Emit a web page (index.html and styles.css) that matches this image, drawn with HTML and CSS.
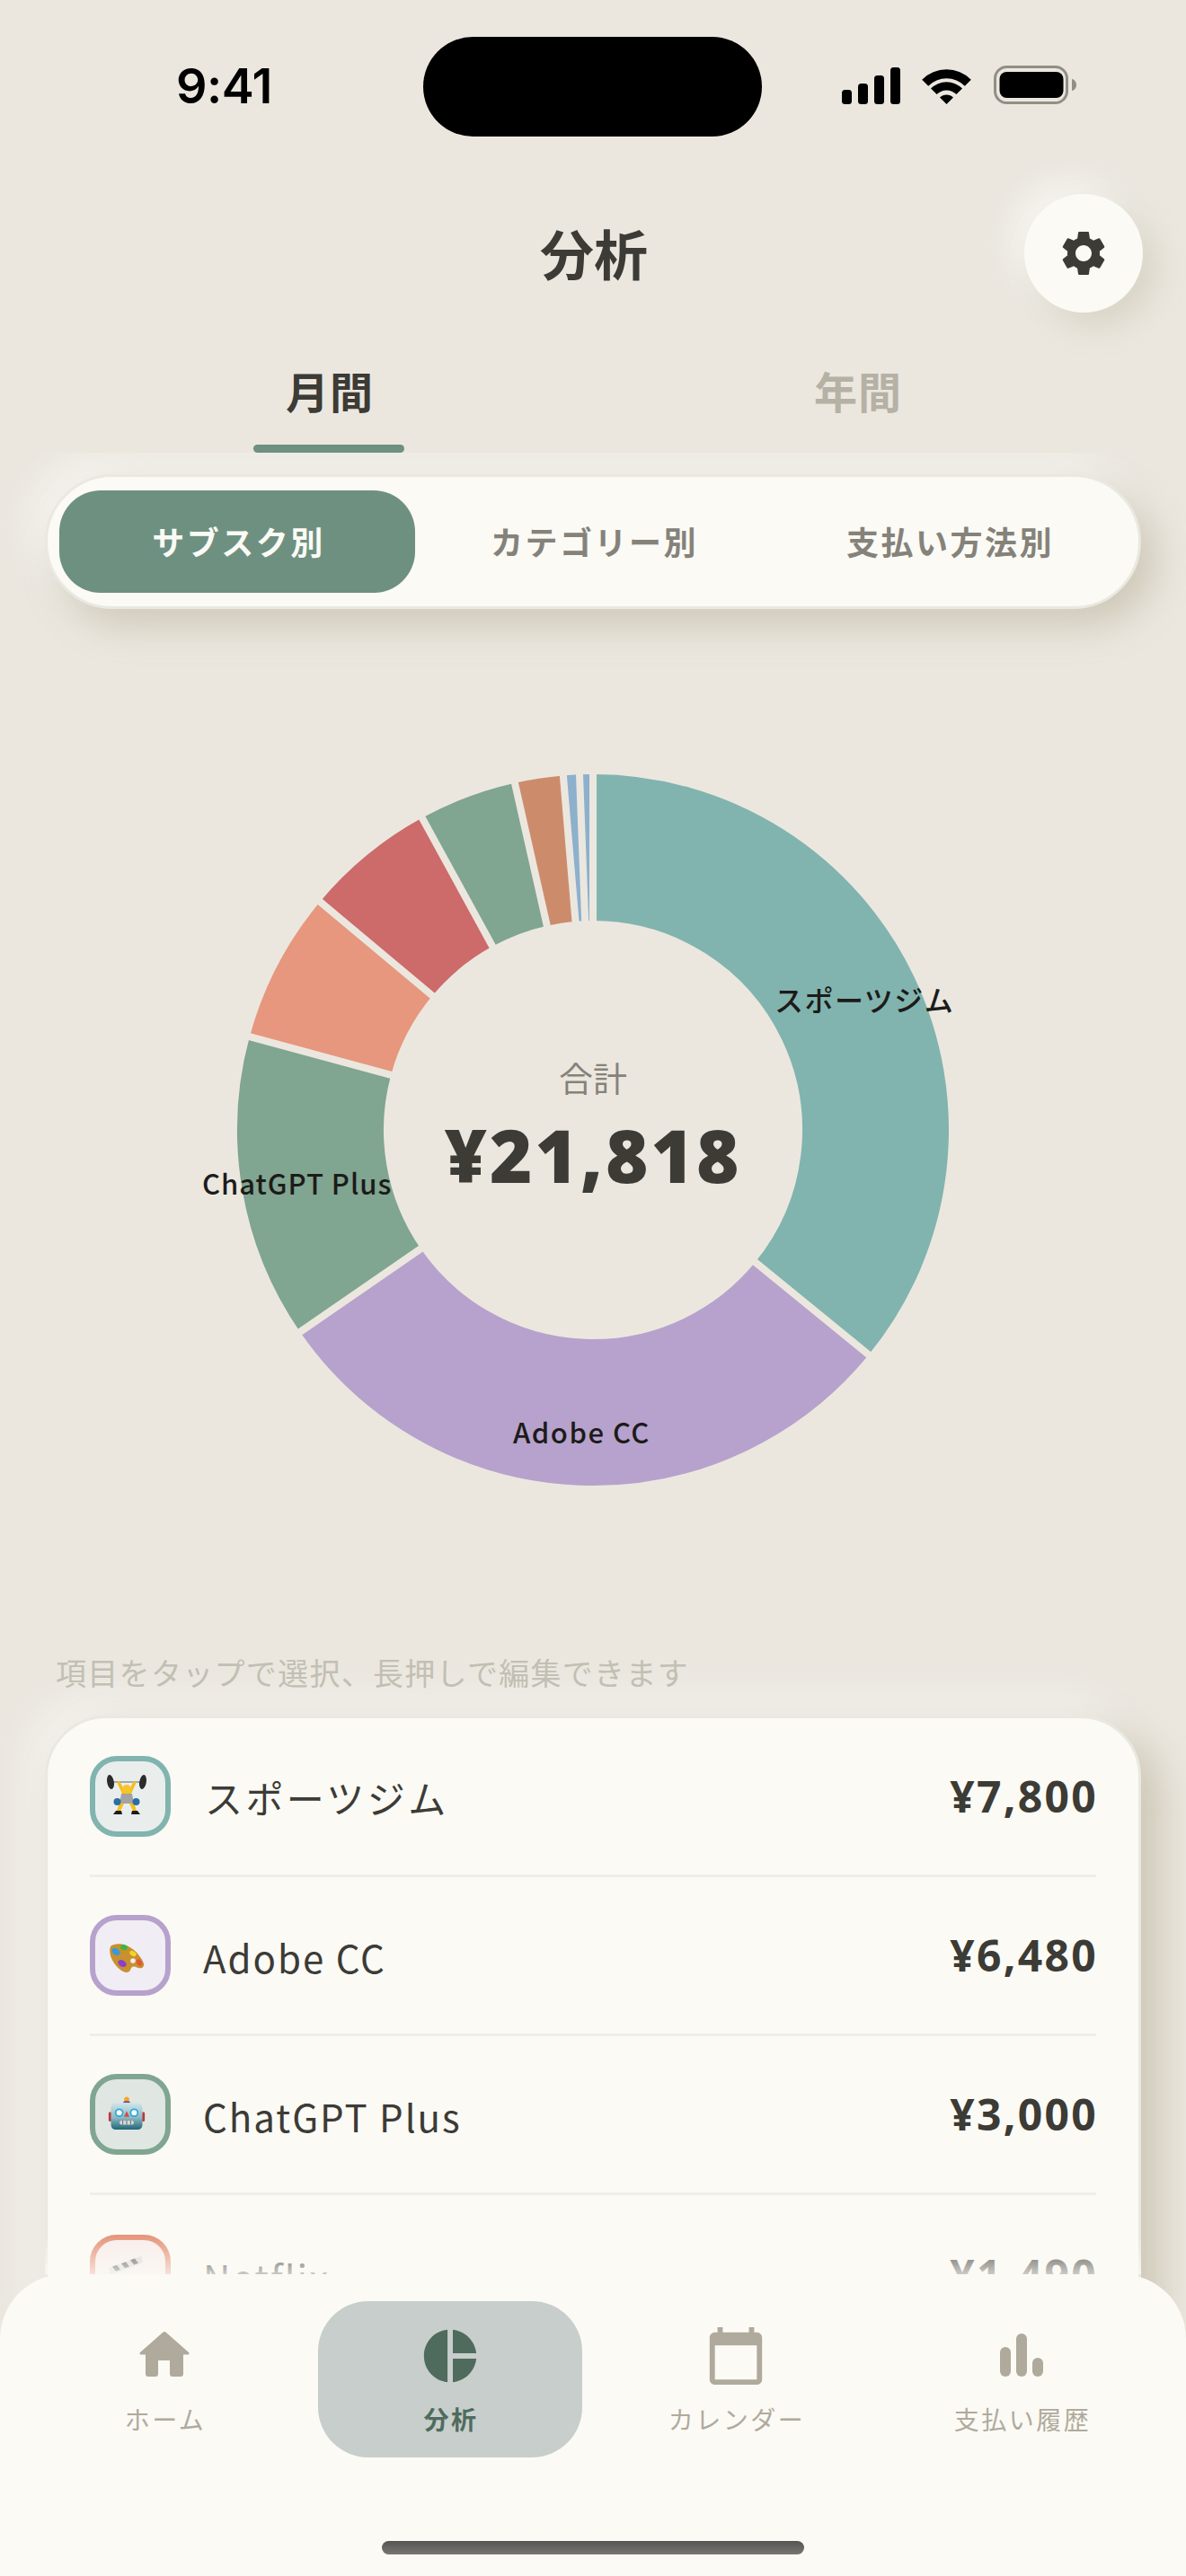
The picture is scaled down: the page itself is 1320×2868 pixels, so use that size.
FILE: index.html
```html
<!DOCTYPE html>
<html lang="ja">
<head>
<meta charset="utf-8">
<title>分析</title>
<link rel="stylesheet" href="styles.css">
</head>
<body>
<div class="page">
  <header class="status">
    <span class="time">9:41</span>
    <div class="island"></div>
    <div class="status-icons">
      <svg class="signal" width="65" height="41" viewBox="0 0 65 41"><rect x="0" y="25" width="11" height="16" rx="3.5"/><rect x="18" y="18" width="11" height="23" rx="3.5"/><rect x="36" y="9" width="11" height="32" rx="3.5"/><rect x="54" y="0" width="11" height="41" rx="3.5"/></svg>
      <svg class="wifi" width="57" height="42" viewBox="0 0 57 42"><path d="M1.2 14.7a38.5 38.5 0 0 1 54.6 0l-7 7a28.5 28.5 0 0 0-40.6 0z"/><path d="M11 24.6a24.5 24.5 0 0 1 35 0l-6.6 6.5a15.2 15.2 0 0 0-21.8 0z"/><path d="M21 34.5a10.6 10.6 0 0 1 15 0L28.5 42z"/></svg>
      <svg class="battery" width="92" height="43" viewBox="0 0 92 43"><rect x="1.5" y="1.5" width="80" height="40" rx="13" fill="none" stroke="#918e86" stroke-width="3"/><rect x="6.500" y="7" width="71" height="29" rx="8"/><path d="M87 15c3 .6 5 3.200 5 6.500s-2 5.900-5 6.500z" fill="#918e86"/></svg>
    </div>
  </header>

  <div class="title-row">
    <h1 class="title">分析</h1>
    <button class="gear-btn">
      <svg width="60" height="60" viewBox="0 0 24 24"><path d="M19.14 12.94c.04-.3.06-.61.06-.94 0-.32-.02-.64-.07-.94l2.03-1.58c.18-.14.23-.41.12-.61l-1.92-3.32c-.12-.22-.37-.29-.59-.22l-2.39.96c-.5-.38-1.03-.7-1.62-.94l-.36-2.54c-.04-.24-.24-.41-.48-.41h-3.84c-.24 0-.43.17-.47.41l-.36 2.54c-.59.24-1.13.57-1.62.94l-2.39-.96c-.22-.08-.47 0-.59.22L2.74 8.87c-.12.21-.08.47.12.61l2.03 1.58c-.05.3-.09.63-.09.94s.02.64.07.94l-2.03 1.58c-.18.14-.23.41-.12.61l1.92 3.32c.12.22.37.29.59.22l2.39-.96c.5.38 1.03.7 1.62.94l.36 2.54c.05.24.24.41.48.41h3.84c.24 0 .44-.17.47-.41l.36-2.54c.59-.24 1.13-.56 1.62-.94l2.39.96c.22.08.47 0 .59-.22l1.92-3.32c.12-.22.07-.47-.12-.61l-2.01-1.58zM12 15.6c-1.98 0-3.6-1.62-3.6-3.6s1.62-3.6 3.6-3.6 3.6 1.62 3.6 3.6-1.62 3.6-3.6 3.6z"/></svg>
    </button>
  </div>

  <nav class="period">
    <div class="period-tab is-active">月間</div>
    <div class="period-tab">年間</div>
  </nav>

  <main class="content">
    <div class="segment">
      <div class="seg is-active">サブスク別</div>
      <div class="seg">カテゴリー別</div>
      <div class="seg">支払い方法別</div>
    </div>

    <section class="chart">
      <svg class="donut" width="800" height="800" viewBox="0 0 800 800">
        <g fill="none" stroke-width="163">
          <path stroke="#81b4ae" d="M400 85.500A314.500 314.500 0 0 1 643.700 598.800"/>
          <path stroke="#b6a2cc" d="M643.700 598.800A314.500 314.500 0 0 1 141.100 578.600"/>
          <path stroke="#80a590" d="M141.100 578.600A314.500 314.500 0 0 1 96.500 317.500"/>
          <path stroke="#e6977d" d="M96.500 317.500A314.500 314.500 0 0 1 158.700 198.300"/>
          <path stroke="#cd6a6a" d="M158.700 198.300A314.500 314.500 0 0 1 249 124.100"/>
          <path stroke="#80a590" d="M249 124.100A314.500 314.500 0 0 1 330.900 93.200"/>
          <path stroke="#cc8c6c" d="M330.900 93.200A314.500 314.500 0 0 1 373.700 86.600"/>
          <path stroke="#8db0cc" d="M373.700 86.600A314.500 314.500 0 0 1 400 85.500"/>
        </g>
        <g class="seps">
          <line x1="400" y1="170" x2="400" y2="0"/>
          <line x1="400" y1="170" x2="400" y2="0" transform="rotate(129.2 400 400)"/>
          <line x1="400" y1="170" x2="400" y2="0" transform="rotate(235.4 400 400)"/>
          <line x1="400" y1="170" x2="400" y2="0" transform="rotate(285.2 400 400)"/>
          <line x1="400" y1="170" x2="400" y2="0" transform="rotate(309.9 400 400)"/>
          <line x1="400" y1="170" x2="400" y2="0" transform="rotate(331.3 400 400)"/>
          <line x1="400" y1="170" x2="400" y2="0" transform="rotate(347.3 400 400)"/>
          <line x1="400" y1="170" x2="400" y2="0" transform="rotate(355.2 400 400)"/>
          <line x1="400" y1="170" x2="400" y2="0" transform="rotate(357.83 400 400)"/>
        </g>
      </svg>
      <div class="chart-center">
        <div class="total-label">合計</div>
        <div class="total-value">¥21,818</div>
      </div>
      <span class="slice-label slice-gym">スポーツジム</span>
      <span class="slice-label slice-gpt">ChatGPT Plus</span>
      <span class="slice-label slice-adobe">Adobe CC</span>
    </section>

    <p class="hint">項目をタップで選択、長押しで編集できます</p>

    <section class="list">
      <div class="row">
        <div class="app-icon teal">
          <svg class="emoji" width="48" height="48" viewBox="0 0 48 48">
            <rect x="4" y="7" width="40" height="2" fill="#a9a9a9"/>
            <ellipse cx="6" cy="8" rx="3.800" ry="8" fill="#2c2c2c" transform="rotate(-10 6 8)"/>
            <ellipse cx="42" cy="8" rx="3.800" ry="8" fill="#2c2c2c" transform="rotate(10 42 8)"/>
            <path d="M13 8l6 13h10l6-13-3-1-5 9h-6l-5-9z" fill="#f5bd1d"/>
            <circle cx="24" cy="16" r="5" fill="#f7c52a"/>
            <path d="M18 21h12l2 11H16z" fill="#a3a3a3"/>
            <path d="M16 31l-3 9h4l4-8zM32 31l3 9h-4l-4-8z" fill="#f5bd1d"/>
            <circle cx="13.500" cy="30" r="4" fill="#2a6da8"/>
            <circle cx="34.500" cy="30" r="4" fill="#2a6da8"/>
            <path d="M9 44l3-4h6l1 4zM39 44l-3-4h-6l-1 4z" fill="#1d1d1d"/>
          </svg>
        </div>
        <div class="name name-ja">スポーツジム</div>
        <div class="price">¥7,800</div>
      </div>
      <div class="row">
        <div class="app-icon purple">
          <svg class="emoji" width="48" height="48" viewBox="0 -5 48 48">
            <path d="M6 9C12 4 24 6 32 13c5 4 9 10 11 15 1 4-2 6-6 5-3-1-5-2-7-1-2 2-2 6-6 6C14 37 2 20 6 9z" fill="#c9902f"/>
            <ellipse cx="12" cy="15" rx="5" ry="3.500" fill="#2f9be0" transform="rotate(35 12 15)"/>
            <ellipse cx="21" cy="10" rx="4" ry="3" fill="#3eb742" transform="rotate(20 21 10)"/>
            <ellipse cx="31" cy="17" rx="4" ry="2.500" fill="#f1d52a" transform="rotate(30 31 17)"/>
            <ellipse cx="19" cy="28" rx="5" ry="3.500" fill="#8b3fc9" transform="rotate(30 19 28)"/>
            <ellipse cx="38" cy="27" rx="2.800" ry="4" fill="#e2543f" transform="rotate(-30 38 27)"/>
            <circle cx="31" cy="25" r="2.800" fill="#f1edf4"/>
          </svg>
        </div>
        <div class="name">Adobe CC</div>
        <div class="price">¥6,480</div>
      </div>
      <div class="row">
        <div class="app-icon green">
          <svg class="emoji" width="42" height="42" viewBox="0 0 48 48">
            <defs><linearGradient id="rb" x1="0" y1="0" x2="0" y2="1"><stop offset="0" stop-color="#cfe6ea"/><stop offset=".55" stop-color="#8db9c2"/><stop offset="1" stop-color="#1f6678"/></linearGradient></defs>
            <circle cx="24" cy="5" r="3.200" fill="#f7a81b"/>
            <path d="M19 9.500h10l-2-2.500h-6z" fill="#6a4a9c"/>
            <rect x="1" y="21" width="4" height="12" rx="1.500" fill="#b83a3a"/>
            <rect x="43" y="21" width="4" height="12" rx="1.500" fill="#b83a3a"/>
            <rect x="4" y="9.500" width="40" height="34" rx="6" fill="url(#rb)"/>
            <circle cx="14.500" cy="22" r="4.500" fill="#fff" stroke="#2aa8e0" stroke-width="2"/>
            <circle cx="33.500" cy="22" r="4.500" fill="#fff" stroke="#2aa8e0" stroke-width="2"/>
            <path d="M24 20l3.500 7h-7z" fill="#d8474a"/>
            <rect x="15" y="32" width="18" height="5" rx="2.500" fill="#d9d9d9"/>
            <path d="M19 32v5M24 32v5M29 32v5" stroke="#555" stroke-width="1"/>
          </svg>
        </div>
        <div class="name">ChatGPT Plus</div>
        <div class="price">¥3,000</div>
      </div>
      <div class="row">
        <div class="app-icon salmon">
          <svg class="emoji" width="48" height="48" viewBox="0 0 48 48">
            <path d="M4 16L40 3l2 7L6 24z" fill="#d9d9d9"/>
            <path d="M8 14.500l5-1.800 4 5.300-5 1.800zM18 11l5-1.800 4 5.300-5 1.800zM28 7.300l5-1.800 4 5.300-5 1.800z" fill="#555"/>
            <rect x="6" y="24" width="38" height="22" fill="#cfcfcf"/>
          </svg>
        </div>
        <div class="name">Netflix</div>
        <div class="price">¥1,490</div>
      </div>
    </section>
  </main>

  <div class="fade"></div>
  <footer class="tabbar">
    <div class="tabs">
      <div class="tab">
        <svg class="tab-icon" width="70" height="70" viewBox="0 0 70 70"><path d="M33 9a3 3 0 0 1 4 0L62 31q1.500 2-1 2.500H56V55a3 3 0 0 1-3 3H44a3 3 0 0 1-3-3V40H28V55a3 3 0 0 1-3 3H17a3 3 0 0 1-3-3V33.500H9q-2.500-.5-1-2.500z"/></svg>
        <span class="tab-label">ホーム</span>
      </div>
      <div class="tab is-active">
        <svg class="tab-icon" width="70" height="70" viewBox="0 0 24 24"><path d="M11 2v20c-5.070-.5-9-4.790-9-10s3.930-9.500 9-10zm2.030 0v8.990H22c-.47-4.740-4.240-8.520-8.970-8.990zm0 11.010V22c4.740-.47 8.500-4.250 8.970-8.990h-8.970z"/></svg>
        <span class="tab-label">分析</span>
      </div>
      <div class="tab">
        <svg class="tab-icon" width="70" height="70" viewBox="0 0 24 24"><path d="M20 3h-1V1h-2v2H7V1H5v2H4c-1.100 0-2 .9-2 2v16c0 1.100.9 2 2 2h16c1.100 0 2-.9 2-2V5c0-1.100-.9-2-2-2zm0 18H4V8h16v13z"/></svg>
        <span class="tab-label">カレンダー</span>
      </div>
      <div class="tab">
        <svg class="tab-icon" width="70" height="70" viewBox="0 0 70 70"><rect x="11" y="25" width="12" height="33" rx="6"/><rect x="29" y="10" width="12" height="48" rx="6"/><rect x="47" y="37" width="12" height="21" rx="6"/></svg>
        <span class="tab-label">支払い履歴</span>
      </div>
    </div>
    <div class="home-indicator"></div>
  </footer>
</div>
</body>
</html>
```

FILE: styles.css
```css
* { box-sizing: border-box; }
html, body { margin: 0; padding: 0; }
body {
  background: #ebe7df;
  font-family: "Noto Sans CJK JP", "Noto Sans", sans-serif;
  color: #3c3b36;
}
.page {
  position: relative;
  width: 1320px;
  height: 2868px;
  overflow: hidden;
  display: flex;
  flex-direction: column;
}

/* status bar */
.status {
  position: relative;
  height: 216px;
  flex: none;
  display: flex;
  justify-content: space-between;
  padding: 0 122px 0 196px;
}
.time {
  font-family: "Inter", "Liberation Sans", sans-serif;
  font-weight: 600;
  font-size: 54px;
  line-height: 60px;
  letter-spacing: -.5px;
  color: #000;
  margin-top: 66px;
}
.island {
  position: absolute;
  left: 471px;
  top: 41px;
  width: 377px;
  height: 111px;
  border-radius: 56px;
  background: #000;
}
.status-icons {
  display: flex;
  align-items: flex-end;
  gap: 23px;
  height: 43px;
  margin-top: 73px;
}
.wifi { margin-right: 1px; }

/* title */
.title-row {
  position: relative;
  height: 132px;
  flex: none;
  display: flex;
  align-items: center;
  justify-content: center;
}
.title {
  margin: 0 0 2px 2px;
  font-size: 60px;
  line-height: 80px;
  font-weight: 700;
  color: #3c3b36;
}
.gear-btn {
  position: absolute;
  left: 1140px;
  top: 0;
  width: 132px;
  height: 132px;
  border: 0;
  padding: 0;
  border-radius: 50%;
  background: #fbfaf5;
  display: flex;
  align-items: center;
  justify-content: center;
  box-shadow: 14px 14px 34px rgba(170, 160, 130, .28), -14px -14px 34px rgba(255, 255, 255, .6);
}
.gear-btn svg { fill: #3c3b36; }

/* month / year */
.period {
  flex: none;
  height: 156px;
  display: grid;
  grid-template-columns: 1fr 1fr;
  padding: 0 72px;
}
.period-tab {
  position: relative;
  text-align: center;
  padding: 57px 0 0 2px;
  font-size: 48px;
  line-height: 58px;
  letter-spacing: 1px;
  font-weight: 700;
  color: #b5b1a5;
}
.period-tab.is-active { color: #3c3b36; }
.period-tab.is-active::after {
  content: "";
  position: absolute;
  left: 50%;
  bottom: 0;
  width: 168px;
  height: 9px;
  margin-left: -84px;
  border-radius: 5px;
  background: #6e9080;
}

/* scrolling content */
.content {
  flex: 1;
  min-height: 0;
  overflow: hidden;
  padding: 24px 50px 0;
}
.segment {
  height: 150px;
  border: 3px solid #e9e8e1;
  border-radius: 75px;
  background: #fbfaf5;
  padding: 15px 13px;
  display: grid;
  grid-template-columns: repeat(3, 396px);
  box-shadow: 16px 18px 40px rgba(160, 150, 120, .38), -16px -18px 40px rgba(255, 255, 255, .55);
}
.seg {
  border-radius: 46px;
  display: flex;
  align-items: center;
  justify-content: center;
  padding: 0 0 2px 3px;
  font-size: 36px;
  font-weight: 700;
  letter-spacing: 2.500px;
  color: #85827a;
}
.seg.is-active {
  background: #6e9080;
  color: #fbfaf5;
}

/* donut */
.chart {
  position: relative;
  width: 800px;
  height: 800px;
  margin: 180px auto 0;
}
.donut { display: block; }
.seps line { stroke: #ebe7df; stroke-width: 8; }
.chart-center {
  position: absolute;
  left: 170px;
  top: 315px;
  width: 460px;
  display: flex;
  flex-direction: column;
  align-items: center;
}
.total-label {
  font-size: 38px;
  line-height: 52px;
  color: #85827a;
}
.total-value {
  font-family: "Open Sans", "Noto Sans CJK JP", sans-serif;
  font-weight: 800;
  font-size: 81px;
  line-height: 100px;
  letter-spacing: 3px;
  margin-top: 11px;
  color: #3c3b36;
}
.slice-label {
  position: absolute;
  font-size: 31px;
  line-height: 44px;
  font-weight: 500;
  white-space: nowrap;
  color: #1c1b1a;
}
.slice-gym { left: 602px; top: 232px; font-size: 32px; letter-spacing: 1.500px; }
.slice-gpt { left: -35px; top: 437px; letter-spacing: 1px; }
.slice-adobe { left: 311px; top: 714px; letter-spacing: 1.500px; }

/* list */
.hint {
  margin: 184px 0 0 12px;
  font-size: 34px;
  line-height: 40px;
  letter-spacing: 1.300px;
  color: #c2bfb4;
}
.list {
  margin-top: 28px;
  border: 3px solid #e9e8e1;
  border-radius: 68px;
  background: #fbfaf5;
  padding: 0 47px;
  box-shadow: 20px 18px 44px rgba(160, 150, 120, .42), -18px -18px 44px rgba(255, 255, 255, .5);
}
.row {
  height: 177px;
  display: flex;
  align-items: center;
  border-bottom: 3px solid #f0eee8;
}
.row:last-child { border-bottom: 0; }
.app-icon {
  width: 90px;
  height: 90px;
  flex: none;
  border: 6px solid;
  border-radius: 30px;
  display: flex;
  align-items: center;
  justify-content: center;
}
.emoji { margin-right: 8px; flex: none; }
.teal { border-color: #81b4ae; background: #e9eeed; }
.purple { border-color: #b6a2cc; background: #f1edf4; }
.green { border-color: #80a590; background: #e0e6e2; }
.salmon { border-color: #e6977d; background: #f8eeeb; }
.name {
  flex: 1;
  margin-left: 36px;
  margin-top: 4px;
  font-size: 42px;
  line-height: 56px;
  letter-spacing: 2px;
  color: #3c3b36;
}
.name-ja { letter-spacing: 3.400px; margin-left: 38px; margin-top: 2px; }
.price {
  font-family: "Open Sans", "Noto Sans CJK JP", sans-serif;
  font-size: 48px;
  line-height: 60px;
  font-weight: 700;
  letter-spacing: 2.300px;
  margin-right: -2px;
  color: #3c3b36;
}

/* bottom nav */
.fade {
  position: absolute;
  left: 50px;
  right: 50px;
  top: 2490px;
  height: 42px;
  background: linear-gradient(to bottom, rgba(251, 250, 245, 0), rgba(251, 250, 245, .75));
}
.tabbar {
  position: absolute;
  left: 0;
  right: 0;
  top: 2532px;
  height: 336px;
  background: #fbfaf5;
  border-radius: 72px 72px 0 0;
}
.tabs {
  display: grid;
  grid-template-columns: repeat(4, 294px);
  gap: 24px;
  padding: 30px 36px 0;
}
.tab {
  height: 174px;
  border-radius: 56px;
  display: flex;
  flex-direction: column;
  align-items: center;
  padding-top: 26px;
  color: #b0aa9c;
}
.tab-icon { fill: #b0aa9c; flex: none; }
.tab-label {
  margin: 15px 0 0 2px;
  font-size: 28px;
  line-height: 40px;
  letter-spacing: 2.500px;
}
.tab.is-active { background: #c7cecb; color: #4f6b5e; }
.tab.is-active .tab-icon { fill: #4f6b5e; }
.tab.is-active .tab-label { font-weight: 700; }
.home-indicator {
  position: absolute;
  left: 425px;
  top: 297px;
  width: 470px;
  height: 15px;
  border-radius: 8px;
  background: linear-gradient(to bottom, #555452, #777673);
}
```
